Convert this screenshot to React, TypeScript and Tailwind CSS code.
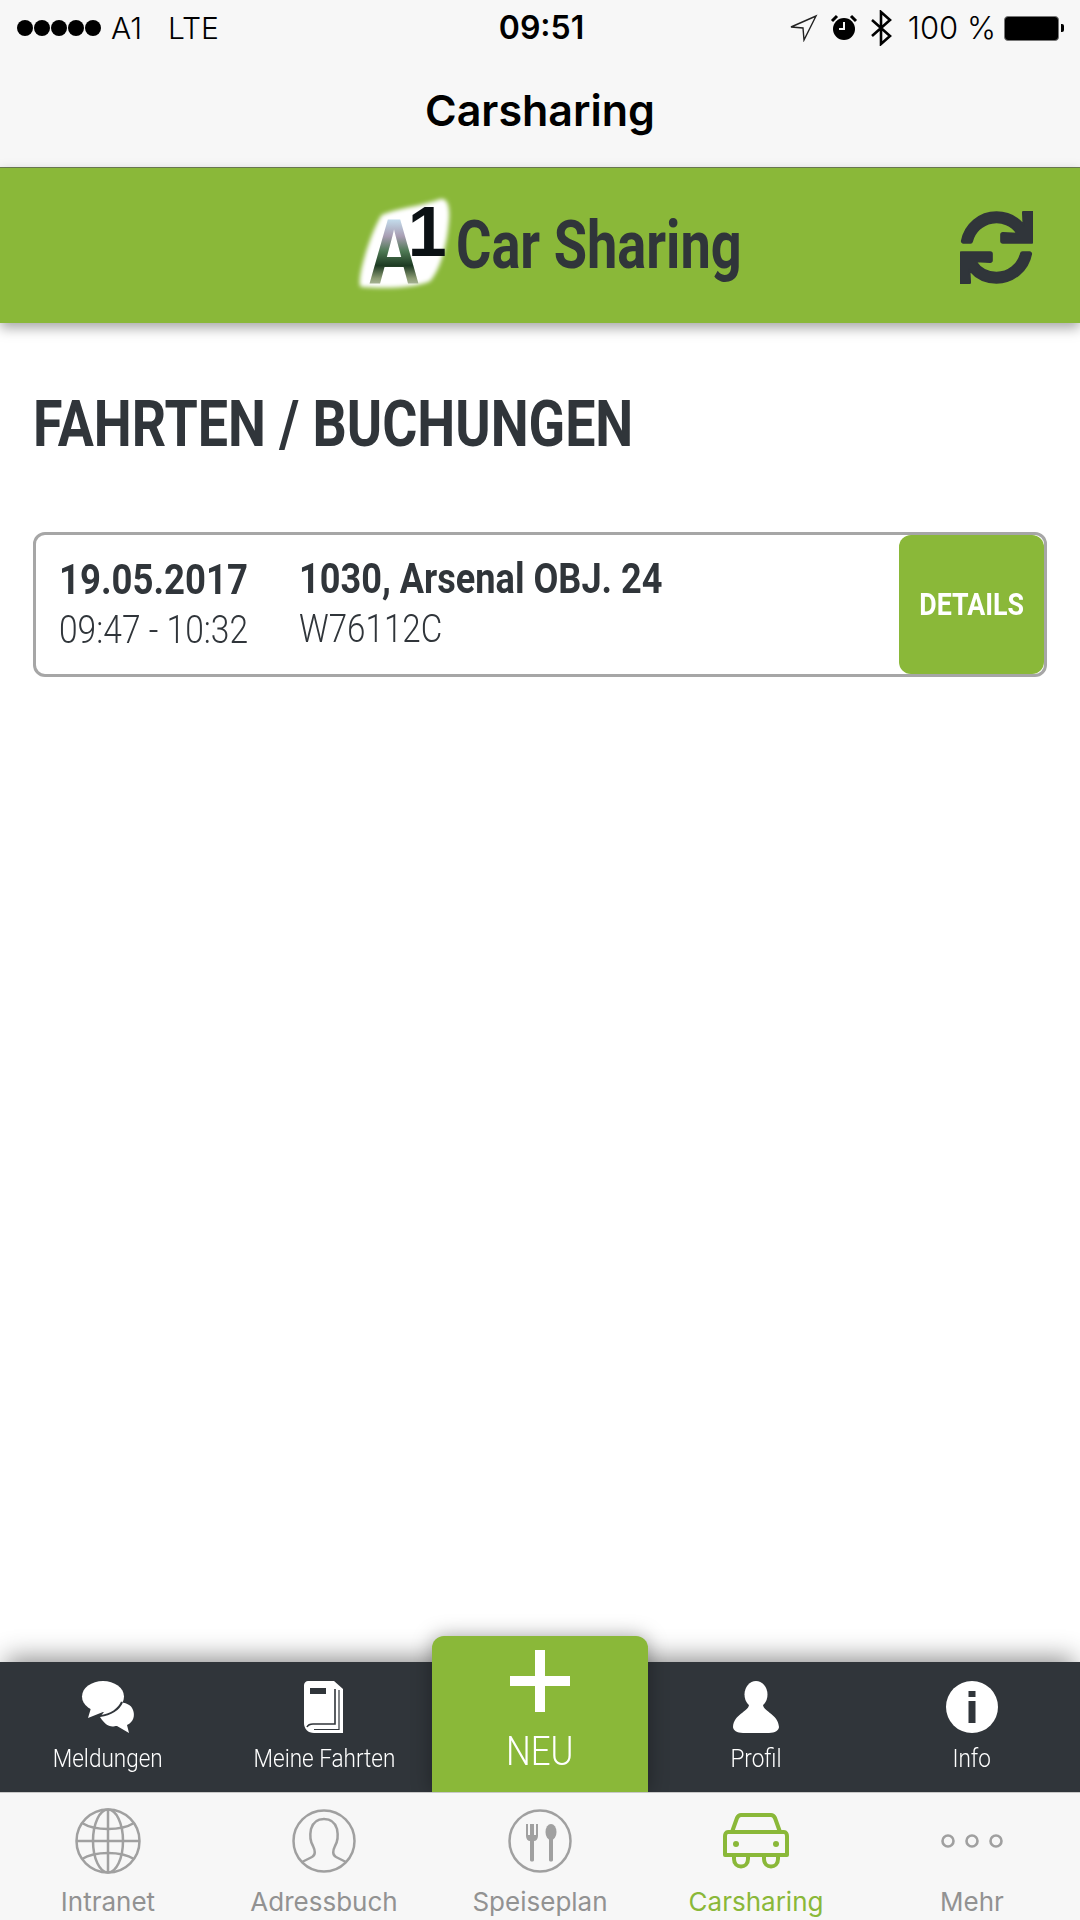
import React from 'react';
import { FaSync } from 'react-icons/fa';

const ROBOTO = "font-[Roboto,sans-serif]";

function Logo() {
  return (
    <svg width="140" height="120" viewBox="0 0 420 360" className="mb-[11px] shrink-0 overflow-visible">
      <defs>
        <linearGradient id="a1" x1="0" y1="0" x2="0" y2="1">
          <stop offset="0.2" stopColor="#c3dcec" />
          <stop offset="0.36" stopColor="#a89db2" />
          <stop offset="0.5" stopColor="#4f7a55" />
          <stop offset="0.64" stopColor="#1d3a22" />
          <stop offset="0.76" stopColor="#8a9a72" />
          <stop offset="0.9" stopColor="#d5dccb" />
        </linearGradient>
        <filter id="glow" x="-20%" y="-20%" width="140%" height="140%">
          <feGaussianBlur stdDeviation="7" />
        </filter>
      </defs>
      <path d="M125 105 C170 85 240 80 300 58 C322 52 332 80 326 130 C320 200 300 270 270 304 C220 326 120 326 62 320 C48 300 90 160 125 105 Z" fill="#fff" filter="url(#glow)" />
      <text transform="translate(162 310) scale(0.78 1)" textAnchor="middle" fontFamily="Liberation Sans" fontWeight="700" fontSize="280" fill="url(#a1)">A</text>
      <text x="262" y="228" textAnchor="middle" fontFamily="Liberation Sans" fontWeight="700" fontSize="210" fill="#0b1114">1</text>
    </svg>
  );
}

function StatusBar() {
  return (
    <div className="grid h-[54px] grid-cols-3 items-center pl-[17px] pr-[16px] pt-[2px] font-[Inter,sans-serif] text-[30px] text-black">
      <div className="flex items-center">
        <div className="flex gap-[1px]">
          {[0, 1, 2, 3, 4].map(i => (
            <span key={i} className="h-[16px] w-[16px] rounded-full bg-black" />
          ))}
        </div>
        <span className="ml-[10px] font-light">A1</span>
        <span className="ml-[26px] font-light">LTE</span>
      </div>
      <div className="pl-[2px] text-center text-[32px] font-semibold">09:51</div>
      <div className="flex items-center justify-end">
        <svg width="28" height="28" viewBox="0 0 28 28" fill="none" stroke="#222" strokeWidth="1.4">
          <path d="M1 13 L26 2 L14 26 L13 14 Z" />
        </svg>
        <svg width="28" height="28" viewBox="0 0 28 28" className="ml-[12px]">
          <circle cx="14" cy="15" r="11" fill="#000" />
          <path d="M14 8 V15 H9" stroke="#f7f7f7" strokeWidth="2" fill="none" />
          <path d="M2 7 L7 2 M26 7 L21 2" stroke="#000" strokeWidth="3" />
        </svg>
        <svg width="24" height="36" viewBox="0 0 24 36" fill="none" stroke="#000" strokeWidth="2.6" className="ml-[12px]">
          <path d="M2 10 L20 26 L11 34 V2 L20 10 L2 26" />
        </svg>
        <span className="ml-[14px] text-[31px] font-light">100 %</span>
        <div className="ml-[8px] flex items-center">
          <div className="h-[25px] w-[55px] rounded-[4px] border border-[#777] bg-black" />
          <div className="ml-[2px] h-[8px] w-[3px] rounded-r-[2px] bg-black" />
        </div>
      </div>
    </div>
  );
}

function DockIcon({ name }: { name: string }) {
  if (name === 'chat') {
    return (
      <svg width="54" height="52" viewBox="0 0 54 52">
        <path d="M19 36 C28 50 34 44 36 45 L48 52 L46 44 C53 41 54 34 52 29 C50 22 40 20 30 22 Z" fill="#fff" />
        <ellipse cx="22" cy="15.5" rx="21" ry="15.5" fill="#fff" />
        <path d="M10 27 L7 37 L22 31 Z" fill="#fff" />
        <path d="M19 35 C30 34 38 28 41 21" stroke="#30353a" strokeWidth="2" fill="none" />
      </svg>
    );
  }
  if (name === 'book') {
    return (
      <svg width="40" height="52" viewBox="0 0 40 52">
        <path d="M4 0 H30 L39 8 V52 H10 C4 52 0 48 0 42 V4 C0 2 2 0 4 0 Z" fill="#fff" />
        <rect x="6" y="7" width="16" height="6" fill="#30353a" />
        <path d="M31 8 V43 H9 C6 43 4 44 3 46" stroke="#30353a" strokeWidth="1.6" fill="none" />
        <path d="M35 9 V48.5 H10" stroke="#30353a" strokeWidth="1.2" fill="none" />
      </svg>
    );
  }
  if (name === 'user') {
    return (
      <svg width="46" height="52" viewBox="0 0 46 52" fill="#fff">
        <ellipse cx="23" cy="13.5" rx="11.5" ry="13.5" />
        <path d="M16 24 C15 31 1 33 0 46 C0 49 4 52 10 52 H36 C42 52 46 49 46 46 C45 33 31 31 30 24 Z" />
      </svg>
    );
  }
  return (
    <svg width="52" height="52" viewBox="0 0 52 52">
      <circle cx="26" cy="26" r="26" fill="#fff" />
      <rect x="22.5" y="10" width="7" height="6" fill="#30353a" />
      <rect x="22.5" y="20" width="7" height="22" fill="#30353a" />
    </svg>
  );
}

function TabIcon({ name }: { name: string }) {
  const gray = '#a0a0a0';
  if (name === 'globe') {
    return (
      <svg width="66" height="68" viewBox="0 0 66 68" fill="none" stroke={gray} strokeWidth="2.5">
        <circle cx="33" cy="34" r="31.5" />
        <ellipse cx="33" cy="34" rx="15" ry="31.5" />
        <path d="M33 2.5 V65.5 M1.5 34 H64.5" />
        <path d="M7 16 C20 24 46 24 59 16 M7 52 C20 44 46 44 59 52" />
      </svg>
    );
  }
  if (name === 'person') {
    return (
      <svg width="64" height="66" viewBox="0 0 64 66" fill="none" stroke={gray} strokeWidth="2.5">
        <circle cx="32" cy="33" r="30.5" />
        <path d="M10 54 L20 49 C24 47 23 42 21 38 C18 33 18 26 19 21 C21 14 26 11 32 11 C38 11 43 14 45 21 C46 26 46 33 43 38 C41 42 40 47 44 49 L54 54" />
      </svg>
    );
  }
  if (name === 'food') {
    return (
      <svg width="64" height="66" viewBox="0 0 64 66">
        <circle cx="32" cy="33" r="30.5" fill="none" stroke={gray} strokeWidth="2.5" />
        <path d="M18 16 V28 C18 31 20 33 22 33 V52 C22 54 26 54 26 52 V33 C28 33 30 31 30 28 V16 H28 V27 H26 V16 H22 V27 H20 V16 Z" fill={gray} />
        <ellipse cx="43" cy="24" rx="5.5" ry="8" fill={gray} />
        <path d="M41 30 V52 C41 54 45 54 45 52 V30 Z" fill={gray} />
      </svg>
    );
  }
  if (name === 'car') {
    return (
      <svg width="66" height="56" viewBox="0 0 66 56" fill="none" stroke="#8ab839" strokeWidth="4" strokeLinejoin="round">
        <path d="M9 19 L14 5 C15 3 16 2 18 2 H48 C50 2 51 3 52 5 L57 19" />
        <path d="M5 19 H61 C63 19 64 21 64 23 V42 H2 V23 C2 21 3 19 5 19 Z" />
        <path d="M11 43 V46 C11 56 25 56 25 46 V43 M41 43 V46 C41 56 55 56 55 46 V43" />
        <circle cx="13" cy="31" r="3" fill="#8ab839" stroke="none" />
        <circle cx="53" cy="31" r="3" fill="#8ab839" stroke="none" />
      </svg>
    );
  }
  return (
    <svg width="64" height="16" viewBox="0 0 64 16" fill="none" stroke={gray} strokeWidth="2.6">
      <circle cx="8" cy="8" r="5.5" /><circle cx="32" cy="8" r="5.5" /><circle cx="56" cy="8" r="5.5" />
    </svg>
  );
}

const dock = [
  { icon: 'chat', label: 'Meldungen' },
  { icon: 'book', label: 'Meine Fahrten' },
  null,
  { icon: 'user', label: 'Profil' },
  { icon: 'info', label: 'Info' },
];

const tabs = [
  { icon: 'globe', label: 'Intranet' },
  { icon: 'person', label: 'Adressbuch' },
  { icon: 'food', label: 'Speiseplan' },
  { icon: 'car', label: 'Carsharing', active: true },
  { icon: 'dots', label: 'Mehr' },
];

export default function App() {
  return (
    <div className="flex h-[1920px] w-[1080px] flex-col overflow-hidden bg-white">
      <header className="h-[168px] border-b border-[#6f7f55] bg-[#f7f7f7]">
        <StatusBar />
        <h1 className="pt-[31px] text-center font-[Inter,sans-serif] text-[43px] font-semibold leading-[50px] text-black">Carsharing</h1>
      </header>

      <div className="relative z-10 flex h-[155px] items-center bg-[#8ab839] pl-[340px] pr-[47px] shadow-[0_5px_12px_rgba(0,0,0,0.35)]">
        <Logo />
        <span className={`${ROBOTO} -ml-[24px] inline-block origin-left scale-x-[0.82] whitespace-nowrap text-[66px] font-bold text-[#30353a]`}>Car Sharing</span>
        <FaSync className="ml-auto mt-[4px] text-[73px] text-[#30353a] stroke-[12]" />
      </div>

      <main className="flex-1 px-[33px] pt-[66px]">
        <h2 className={`${ROBOTO} origin-left scale-x-[0.82] whitespace-nowrap text-[65.5px] font-bold leading-[70px] text-[#30353a]`}>FAHRTEN / BUCHUNGEN</h2>
        <div className="mt-[73px] flex h-[145px] items-stretch overflow-hidden rounded-[12px] border-[3px] border-[#a6a6a6]">
          <div className="flex flex-1 items-center pl-[23px] text-[#30353a]">
            <div className="w-[240px]">
              <div className={`${ROBOTO} origin-left scale-x-[0.85] whitespace-nowrap text-[43px] font-bold leading-[50px]`}>19.05.2017</div>
              <div className={`${ROBOTO} origin-left scale-x-[0.85] whitespace-nowrap text-[39.5px] font-light leading-[51px]`}>09:47 - 10:32</div>
            </div>
            <div>
              <div className={`${ROBOTO} origin-left scale-x-[0.85] whitespace-nowrap text-[42.5px] font-bold leading-[50px]`}>1030, Arsenal OBJ. 24</div>
              <div className={`${ROBOTO} origin-left scale-x-[0.85] whitespace-nowrap text-[39px] font-light leading-[51px]`}>W76112C</div>
            </div>
          </div>
          <div className="flex w-[145px] items-center justify-center rounded-[12px] bg-[#8ab839]">
            <span className={`${ROBOTO} scale-x-[0.85] text-[31.5px] font-bold text-white`}>DETAILS</span>
          </div>
        </div>
      </main>

      <div className="grid h-[130px] grid-cols-5 bg-[#30353a] shadow-[0_-10px_24px_-6px_rgba(0,0,0,0.45)]">
        {dock.map((d, i) =>
          d ? (
            <div key={d.label} className="flex flex-col items-center pt-[19px]">
              <div className="flex h-[52px] items-center"><DockIcon name={d.icon} /></div>
              <span className={`${ROBOTO} mt-[7px] scale-x-[0.85] whitespace-nowrap text-[26.5px] font-light leading-[36px] text-white`}>{d.label}</span>
            </div>
          ) : (
            <div key={i} className="-mt-[26px] flex flex-col items-center rounded-t-[12px] bg-[#8ab839] pt-[14px] shadow-[0_0_20px_rgba(0,0,0,0.35)]">
              <svg width="60" height="62" viewBox="0 0 60 62" fill="#fff">
                <rect x="25" y="0" width="10" height="62" />
                <rect x="0" y="26" width="60" height="10" />
              </svg>
              <span className={`${ROBOTO} mt-[15px] scale-x-[0.85] text-[41px] font-light leading-[48px] text-white`}>NEU</span>
            </div>
          )
        )}
      </div>

      <nav className="grid h-[128px] grid-cols-5 border-t border-[#c8c8c8] bg-[#f7f7f7]">
        {tabs.map(t => (
          <div key={t.label} className="flex flex-col items-center pt-[14px]">
            <div className="flex h-[68px] items-center"><TabIcon name={t.icon} /></div>
            <span className={`mt-[12px] font-[Inter,sans-serif] text-[26px] leading-[30px] ${t.active ? 'text-[#8ab839]' : 'text-[#929292]'}`}>{t.label}</span>
          </div>
        ))}
      </nav>
    </div>
  );
}
